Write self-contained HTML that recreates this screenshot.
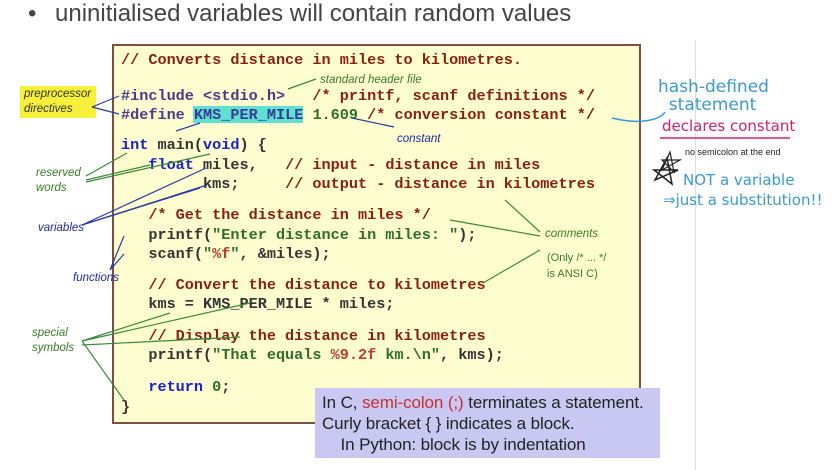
<!DOCTYPE html>
<html><head><style>
body{margin:0;width:832px;height:470px;background:#fff;position:relative;overflow:hidden;font-family:"Liberation Sans",sans-serif}
.a{position:absolute;white-space:pre}
.c{font-family:"Liberation Mono",monospace;font-weight:bold;font-size:15.2px;color:#333;line-height:18px}
.cm{color:#8a1e12}.kw{color:#1a22c8}.st{color:#2d6e2a}.pc{color:#c0392b}
.lab{font-style:italic;font-size:11.5px;line-height:15px}
.g{color:#3a7a2a}.b{color:#1f2a9a}
.hw{font-family:"DejaVu Sans",sans-serif;color:#3a9ad0}
</style></head><body>
<div class="a" style="left:28px;top:-1px;font-size:24px;color:#444;line-height:30px">•<span style="position:absolute;left:27px">uninitialised variables will contain random values</span></div>
<div class="a" style="left:695px;top:40px;width:1px;height:430px;background:#ddd"></div>
<div class="a" style="left:112px;top:44px;width:525px;height:376px;background:#fefdd0;border:2px solid #7a5040"></div>
<div class="a" style="left:193px;top:106px;width:110px;height:17px;background:#5fe0d0"></div>
<div class="a" style="left:20px;top:86px;width:76px;height:32px;background:#f6f03a"></div>

<div class="a c cm" style="left:121px;top:51px">// Converts distance in miles to kilometres.</div>
<div class="a c" style="left:121px;top:87px"><span style="color:#4a3a8a">#include &lt;stdio.h&gt;</span>   <span class="cm">/* printf, scanf definitions */</span></div>
<div class="a c" style="left:121px;top:106px"><span style="color:#4a3a8a">#define</span> <span style="color:#3a3a9a">KMS_PER_MILE</span> <span class="st">1.609</span> <span class="cm">/* conversion constant */</span></div>
<div class="a c" style="left:121px;top:136px"><span class="kw">int</span> main(<span class="kw">void</span>) {</div>
<div class="a c" style="left:121px;top:156px">   <span class="kw">float</span> miles,   <span class="cm">// input - distance in miles</span></div>
<div class="a c" style="left:121px;top:175px">         kms;     <span class="cm">// output - distance in kilometres</span></div>
<div class="a c cm" style="left:121px;top:206px">   /* Get the distance in miles */</div>
<div class="a c" style="left:121px;top:226px">   printf(<span class="st">"Enter distance in miles: "</span>);</div>
<div class="a c" style="left:121px;top:245px">   scanf(<span class="st">"<span class="pc">%f</span>"</span>, &amp;miles);</div>
<div class="a c cm" style="left:121px;top:276px">   // Convert the distance to kilometres</div>
<div class="a c" style="left:121px;top:295px">   kms = KMS_PER_MILE * miles;</div>
<div class="a c cm" style="left:121px;top:327px">   // Display the distance in kilometres</div>
<div class="a c" style="left:121px;top:346px">   printf(<span class="st">"That equals <span class="pc">%9.2f</span> km.\n"</span>, kms);</div>
<div class="a c" style="left:121px;top:378px">   <span class="kw">return</span> <span class="st">0</span>;</div>
<div class="a c" style="left:121px;top:398px">}</div>

<div class="a lab" style="left:24px;top:87px;color:#333">preprocessor<br>directives</div>
<div class="a lab g" style="left:320px;top:73px">standard header file</div>
<div class="a lab b" style="left:397px;top:132px">constant</div>
<div class="a lab g" style="left:36px;top:166px">reserved<br>words</div>
<div class="a lab b" style="left:38px;top:221px">variables</div>
<div class="a lab b" style="left:73px;top:271px">functions</div>
<div class="a lab g" style="left:545px;top:227px">comments</div>
<div class="a lab g" style="left:547px;top:250px;font-style:normal;font-size:11px;line-height:16px">(Only /* ... */<br>is ANSI C)</div>
<div class="a lab g" style="left:32px;top:326px">special<br>symbols</div>

<svg class="a" style="left:0;top:0" width="832" height="470" fill="none" stroke-width="1.2">
<g stroke="#2a3aa0">
<path d="M92 107L119 96M92 107L119 114M176 131L200 123M394 127L352 118M82 225L200 188M82 225L206 168M82 225L207 185M110 270L124 236M110 270L124 254"/>
</g>
<g stroke="#3a8a3a">
<path d="M316 79L288 89M86 176L127 153M86 182L210 154M86 180L150 165M540 236L450 220M540 232L505 200M540 250L483 283M82 341L170 313M82 341L250 303M82 345L240 337M82 341L124 400"/>
</g>
<path d="M612 118C640 125 660 120 665 112" stroke="#3a9ad0" stroke-width="1.5"/>
<path d="M660 138L790 138" stroke="#d02070" stroke-width="1.5"/>
<path d="M662 170l8-18l4 20l-12-12h18z" stroke="#222"/>
<path d="M655 180l12-22l5 26l-18-14h24z" stroke="#222" stroke-width="1.5"/>
</svg>
<div class="a hw" style="left:658px;top:78px;font-size:17px;line-height:18px">hash-defined<br>  statement</div>
<div class="a" style="left:662px;top:117px;font-size:15px;color:#d02070;font-family:'DejaVu Sans',sans-serif">declares constant</div>
<div class="a" style="left:685px;top:147px;font-size:9px;color:#222">no semicolon at the end</div>
<div class="a hw" style="left:683px;top:170px;font-size:15px;line-height:20px">NOT a variable<br><span style="margin-left:-20px">⇒just a substitution!!</span></div>

<div class="a" style="left:315px;top:388px;width:345px;height:70px;background:#c9c8f2"></div>
<div class="a" style="left:322px;top:392px;font-size:17px;line-height:21px;color:#222;letter-spacing:-0.1px">In C, <span style="color:#c83030">semi-colon (;)</span> terminates a statement.<br>Curly bracket { } indicates a block.<br>    In Python: block is by indentation</div>
</body></html>
